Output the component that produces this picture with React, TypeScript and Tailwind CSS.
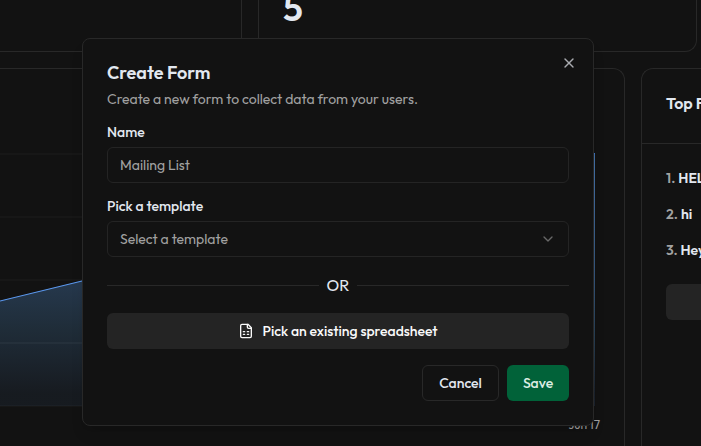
import type { ReactNode } from "react";
import { X, ChevronDown } from "lucide-react";

function SheetIcon() {
  return (
    <svg className="size-4 shrink-0" viewBox="0 0 24 24" fill="none" stroke="currentColor" strokeWidth="2" strokeLinecap="round" strokeLinejoin="round">
      <path d="M15 2H6a2 2 0 0 0-2 2v16a2 2 0 0 0 2 2h12a2 2 0 0 0 2-2V7Z" />
      <path d="M14 2v4a2 2 0 0 0 2 2h4" />
      <path d="M8 13h2M14 13h2M8 17h2M14 17h2" />
    </svg>
  );
}

function Chart() {
  return (
    <svg className="block" width="624" height="337" viewBox="0 69 624 337" overflow="visible">
      <defs>
        <linearGradient id="area" x1="0" y1="153" x2="0" y2="406" gradientUnits="userSpaceOnUse">
          <stop offset="5%" stopColor="#60a5fa" stopOpacity="0.4" />
          <stop offset="50%" stopColor="#5a9cea" stopOpacity="0.28" />
          <stop offset="70%" stopColor="#5aa4e6" stopOpacity="0.18" />
          <stop offset="95%" stopColor="#60a5fa" stopOpacity="0.06" />
        </linearGradient>
      </defs>
      <path d="M0 154H594M0 217H594M0 280H594M0 343H594M0 406H594" stroke="#1d1d1d" />
      <path d="M0 301L82 281L180 256L500 330L595 153V406H0Z" fill="url(#area)" />
      <path d="M0 301L82 281L180 256L500 330" fill="none" stroke="#5b98ee" strokeWidth="1.2" />
      <path d="M0 343H594" stroke="#ffffff" strokeOpacity="0.03" />
      <rect x="594" y="153" width="1" height="253" fill="url(#area)" />
      <rect x="594" y="153" width="1" height="1.5" fill="#4077c4" />
    </svg>
  );
}

function Entry({ n, children }: { n: number; children: ReactNode }) {
  return (
    <li className="flex h-5 items-center gap-[3px] whitespace-nowrap">
      <span className="text-[#a1a1a1]">{n}.</span>
      <span>{children}</span>
    </li>
  );
}

function Dashboard() {
  return (
    <div className="flex h-[446px] w-[701px] flex-col gap-4 overflow-hidden">
      <div className="flex h-[52px] shrink-0 gap-4">
        <div className="w-[242px] shrink-0 rounded-br-xl border-r border-b border-[#282828]" />
        <div className="h-[52px] w-[439px] shrink-0 overflow-hidden rounded-b-xl border-x border-b border-[#282828] pl-6">
          <div className="-mt-[14px] text-[36px] leading-[44px] font-semibold">5</div>
        </div>
      </div>
      <div className="flex min-h-0 flex-1 gap-4">
        <div className="w-[625px] shrink-0 rounded-tr-xl border-t border-r border-[#282828]">
          <Chart />
          <div className="mt-[11px] pr-6 text-right text-[12px] leading-4 text-[#a1a1a1]">Jun 17</div>
        </div>
        <div className="w-[300px] shrink-0 rounded-tl-xl border-t border-l border-[#282828]">
          <div className="flex h-[75px] items-center border-b border-[#282828] pb-[7px] pl-6 text-[16px] font-semibold whitespace-nowrap">Top Forms</div>
          <ol className="mt-6 flex flex-col gap-4 pl-6 text-[14px] leading-5 font-semibold">
            <Entry n={1}>HELLO</Entry>
            <Entry n={2}>hi</Entry>
            <Entry n={3}>Hey there</Entry>
          </ol>
          <div className="mt-6 ml-6 h-9 rounded-md bg-[#242424]" />
        </div>
      </div>
    </div>
  );
}

function CreateFormDialog() {
  return (
    <div className="absolute top-[38px] left-[82px] flex h-[388px] w-[512px] flex-col rounded-lg border border-[#282828] bg-[#121212] p-6 shadow-lg">
      <X className="absolute top-4 right-4 size-4 text-[#a9abb0]" strokeWidth={2} />
      <h2 className="pt-px text-[18px] leading-[18px] font-semibold">Create Form</h2>
      <p className="mt-[7px] text-[14px] leading-5 text-[#a1a1a1]">Create a new form to collect data from your users.</p>
      <label className="mt-[14px] text-[14px] leading-[18px] font-medium">Name</label>
      <div className="mt-[6px] flex h-9 shrink-0 items-center rounded-md border border-[#242424] px-3 pt-px text-[14px] text-[#a1a1a1]">Mailing List</div>
      <label className="mt-[14px] text-[14px] leading-[18px] font-medium">Pick a template</label>
      <div className="mt-[6px] flex h-9 shrink-0 items-center justify-between rounded-md border border-[#242424] px-3 text-[14px] text-[#a1a1a1]">
        <span>Select a template</span>
        <ChevronDown className="size-4 opacity-60" />
      </div>
      <div className="mt-4 flex h-6 shrink-0 items-center gap-2 text-[16px]">
        <div className="h-px flex-1 bg-[#282828]" />
        <span>OR</span>
        <div className="h-px flex-1 bg-[#282828]" />
      </div>
      <button className="mt-4 flex h-9 shrink-0 items-center justify-center gap-2 rounded-md bg-[#242424] text-[14px] leading-5 font-medium text-[#fafafa]">
        <SheetIcon />
        <span>Pick an existing spreadsheet</span>
      </button>
      <div className="mt-4 flex justify-end gap-2 text-[14px] leading-5 font-medium">
        <button className="h-9 w-[77px] rounded-md border border-[#282828]">Cancel</button>
        <button className="h-9 w-[62px] rounded-md bg-[#016239] text-[#dcede3]">Save</button>
      </div>
    </div>
  );
}

export default function App() {
  return (
    <main className="relative h-[446px] w-[701px] overflow-hidden bg-[#121212] font-['Outfit','Lato',sans-serif] text-[#e2e8f0]">
      <Dashboard />
      <CreateFormDialog />
    </main>
  );
}
